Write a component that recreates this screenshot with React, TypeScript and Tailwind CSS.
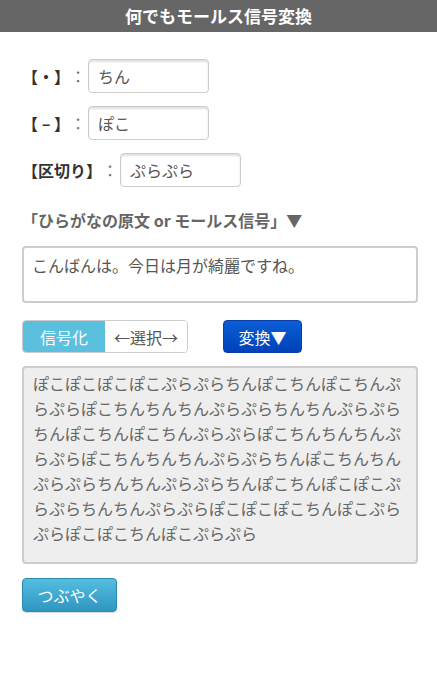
import type { ReactNode } from "react";

const FONT = { fontFamily: '"Noto Sans CJK JP", "Noto Sans", sans-serif' };

const output =
  "ぽこぽこぽこぽこぷらぷらちんぽこちんぽこちんぷらぷらぽこちんちんちんぷらぷらちんちんぷらぷらちんぽこちんぽこちんぷらぷらぽこちんちんちんぷらぷらぽこちんちんちんぷらぷらちんぽこちんちんぷらぷらちんちんぷらぷらちんぽこちんぽこぽこぷらぷらちんちんぷらぷらぽこぽこぽこちんぽこぷらぷらぽこぽこちんぽこぷらぷら";

function Field({ label, value, labelClass = "" }: { label: ReactNode; value: string; labelClass?: string }) {
  return (
    <div className="flex items-center">
      <span className={`text-[16px] font-bold text-[#333] ${labelClass}`}>{label}</span>
      <span className="text-[16px] text-[#777]">：</span>
      <div className="ml-[2px] flex h-[34px] w-[121px] items-center rounded-[4px] border border-[#ccc] px-[9px] text-[16px] text-[#555] shadow-[inset_0_2px_2px_rgba(0,0,0,0.12)]">
        {value}
      </div>
    </div>
  );
}

export default function App() {
  return (
    <div className="min-h-[680px] w-[437px] bg-white" style={FONT}>
      <header className="flex h-[32px] items-center justify-center bg-[#666] text-[17px] font-bold text-white">
        何でもモールス信号変換
      </header>

      <div className="px-[22px]">
        <div className="mt-[27px] flex flex-col gap-[13px]">
          <Field label="【・】" value="ちん" labelClass="w-[48px]" />
          <Field
            label={
              <>
                <span>【</span>
                <span>–</span>
                <span>】</span>
              </>
            }
            value="ぽこ"
            labelClass="flex w-[48px] justify-between"
          />
          <Field label="【区切り】" value="ぷらぷら" />
        </div>

        <p className="mt-[21px] text-[16px] leading-[24px] font-bold text-[#666]">
          「ひらがなの原文 or モールス信号」▼
        </p>

        <div className="mt-[14px] h-[57px] w-[396px] rounded-[4px] border-2 border-[#ccc] px-[8px] pt-[5px] text-[16px] leading-[25px] text-[#555]">
          こんばんは。今日は月が綺麗ですね。
        </div>

        <div className="mt-[17px] flex items-center">
          <div className="flex h-[33px] overflow-hidden rounded-[4px] border border-[#ccc] text-[16px]">
            <span className="flex w-[82px] items-center justify-center bg-[#5bc0de] text-white">信号化</span>
            <span className="flex w-[82px] items-center justify-center bg-white text-[#555]">←選択→</span>
          </div>
          <button className="ml-[35px] flex h-[33px] w-[79px] items-center justify-center rounded-[4px] border border-[#0a3fa8] bg-gradient-to-b from-[#0b5ed7] to-[#0041b8] text-[16px] text-white">
            変換▼
          </button>
        </div>

        <div className="mt-[13px] h-[198px] w-[396px] rounded-[4px] border-2 border-[#ccc] bg-[#eee] px-[9px] pt-[3px] text-[16px] leading-[25px] break-all text-[#666]">
          {output}
        </div>

        <button className="mt-[14px] flex h-[34px] w-[95px] items-center justify-center rounded-[4px] border border-[#2a8ab0] bg-gradient-to-b from-[#54bde0] to-[#2e96c0] text-[16px] text-white shadow-[0_1px_1px_rgba(0,0,0,0.15)]">
          つぶやく
        </button>
      </div>
    </div>
  );
}
